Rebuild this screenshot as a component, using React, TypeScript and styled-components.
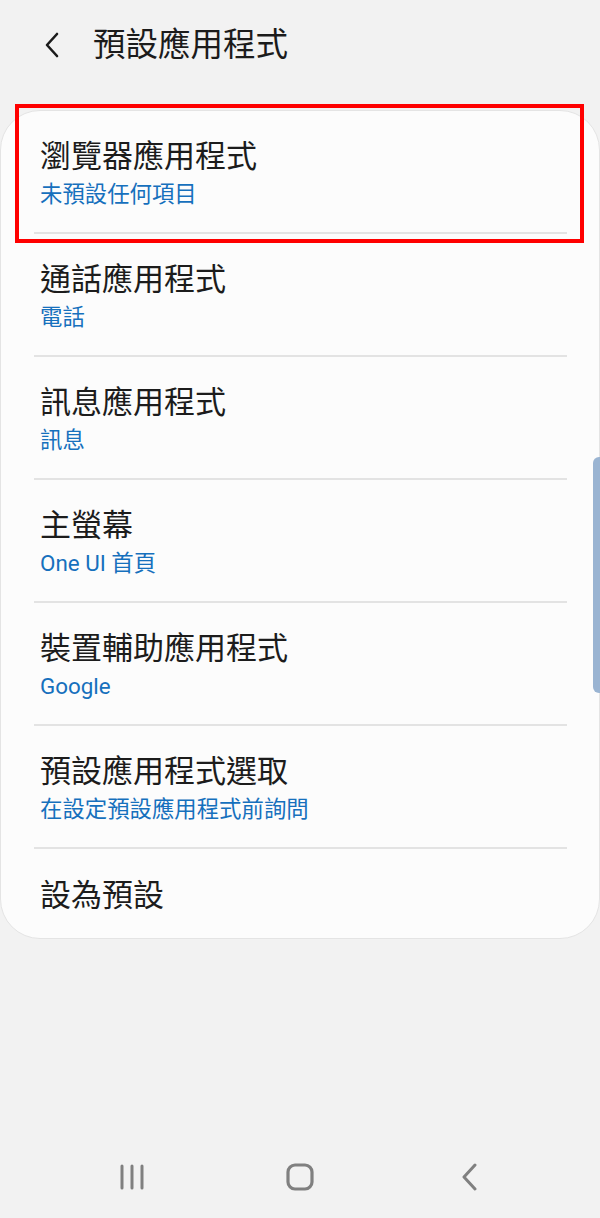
import React from "react";
import styled, { createGlobalStyle } from "styled-components";

const GlobalStyle = createGlobalStyle`
  html, body {
    margin: 0;
    padding: 0;
    background: #f2f2f2;
  }
  body {
    font-family: Roboto, "Noto Sans CJK TC", "Noto Sans", sans-serif;
    -webkit-font-smoothing: antialiased;
  }
`;

const Page = styled.div`
  position: relative;
  width: 600px;
  height: 1218px;
  display: flex;
  flex-direction: column;
  background: #f2f2f2;
  overflow: hidden;
`;

const Header = styled.header`
  height: 90px;
  display: flex;
  align-items: center;
  padding-left: 38px;
  gap: 27px;
  flex-shrink: 0;
`;

const BackButton = styled.button`
  width: 28px;
  height: 28px;
  padding: 0;
  border: none;
  background: none;
  display: flex;
  align-items: center;
  justify-content: center;
  color: #1b1b1b;
`;

const HeaderTitle = styled.h1`
  margin: 0;
  font-size: 32.5px;
  font-weight: 400;
  color: #1b1b1b;
  line-height: 40px;
`;

const Card = styled.section`
  position: relative;
  margin-top: 20px;
  background: #fcfcfc;
  border: 1px solid #e4e4e4;
  border-radius: 40px;
  display: flex;
  flex-direction: column;
`;

const Row = styled.div<{ $last?: boolean }>`
  margin: 0 32px 0 33px;
  box-sizing: border-box;
  height: ${(p) => (p.$last ? "89px" : "123px")};
  padding-top: ${(p) => (p.$last ? "28px" : "27px")};
  border-bottom: ${(p) => (p.$last ? "none" : "2px solid #e3e3e3")};
  display: flex;
  flex-direction: column;
`;

const RowTitle = styled.div`
  margin-left: 6px;
  font-size: 31px;
  line-height: 38px;
  color: #1c1c1c;
`;

const RowSub = styled.div`
  margin-left: 6px;
  margin-top: 3px;
  font-size: 22.4px;
  line-height: 30px;
  color: #1670bd;
`;

const Highlight = styled.div`
  position: absolute;
  top: -7px;
  left: 14px;
  width: 569px;
  height: 139px;
  box-sizing: border-box;
  border: 4px solid #ff0000;
  pointer-events: none;
`;

const ScrollThumb = styled.div`
  position: absolute;
  right: 0;
  top: 457px;
  width: 7px;
  height: 236px;
  background: #9ab4d2;
  border-radius: 6px 0 0 6px;
`;

const NavBar = styled.nav`
  margin-top: auto;
  height: 82px;
  display: grid;
  grid-template-columns: 132px 168px 169px;
  align-items: center;
`;

const NavSlot = styled.div`
  display: flex;
  justify-content: center;
  width: 40px;
  justify-self: end;
  margin-right: -20px;
`;

const items = [
  { title: "瀏覽器應用程式", sub: "未預設任何項目" },
  { title: "通話應用程式", sub: "電話" },
  { title: "訊息應用程式", sub: "訊息" },
  { title: "主螢幕", sub: "One UI 首頁" },
  { title: "裝置輔助應用程式", sub: "Google" },
  { title: "預設應用程式選取", sub: "在設定預設應用程式前詢問" },
];

export default function App() {
  return (
    <>
      <GlobalStyle />
      <Page>
        <Header>
          <BackButton aria-label="back">
            <svg width="20" height="26" viewBox="0 0 20 26">
              <path
                d="M15 2 L5 13 L15 24"
                fill="none"
                stroke="#1b1b1b"
                strokeWidth="2.6"
                strokeLinecap="round"
                strokeLinejoin="round"
              />
            </svg>
          </BackButton>
          <HeaderTitle>預設應用程式</HeaderTitle>
        </Header>
        <Card>
          <Highlight />
          {items.map((it) => (
            <Row key={it.title}>
              <RowTitle>{it.title}</RowTitle>
              <RowSub>{it.sub}</RowSub>
            </Row>
          ))}
          <Row $last>
            <RowTitle>設為預設</RowTitle>
          </Row>
        </Card>
        <ScrollThumb />
        <NavBar>
          <NavSlot>
            <svg width="26" height="26" viewBox="0 0 26 26">
              <g stroke="#808080" strokeWidth="3" strokeLinecap="round">
                <line x1="3" y1="2" x2="3" y2="24" />
                <line x1="13" y1="2" x2="13" y2="24" />
                <line x1="23" y1="2" x2="23" y2="24" />
              </g>
            </svg>
          </NavSlot>
          <NavSlot>
            <svg width="28" height="28" viewBox="0 0 28 28">
              <rect
                x="2"
                y="2"
                width="24"
                height="24"
                rx="7"
                fill="none"
                stroke="#808080"
                strokeWidth="3.2"
              />
            </svg>
          </NavSlot>
          <NavSlot>
            <svg width="18" height="28" viewBox="0 0 18 28">
              <path
                d="M15 2 L4 14 L15 26"
                fill="none"
                stroke="#808080"
                strokeWidth="3"
                strokeLinecap="round"
                strokeLinejoin="round"
              />
            </svg>
          </NavSlot>
        </NavBar>
      </Page>
    </>
  );
}
